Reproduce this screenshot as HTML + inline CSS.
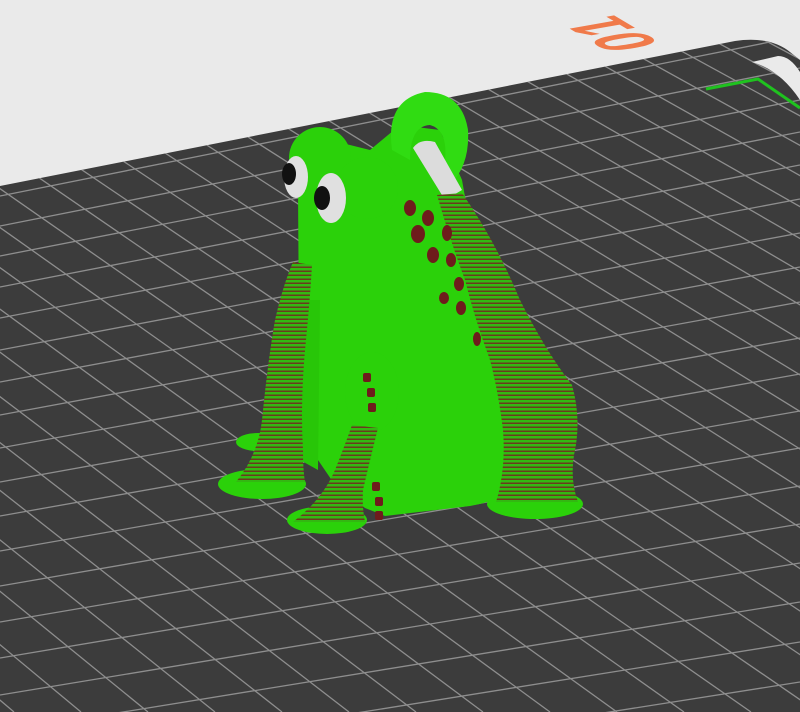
<!DOCTYPE html>
<html><head><meta charset="utf-8"><style>html,body{margin:0;padding:0;background:#eaeaea;overflow:hidden;width:800px;height:712px}svg{display:block}</style></head>
<body>
<svg width="800" height="712" viewBox="0 0 800 712" xmlns="http://www.w3.org/2000/svg">
<defs>
<clipPath id="plate"><path d="M0,186 L735,41 Q770,36 790,52 L800,60 L800,712 L0,712 Z"/></clipPath>
<pattern id="str" width="6" height="4" patternUnits="userSpaceOnUse"><rect width="6" height="4" fill="#33b812"/><rect y="2.5" width="6" height="1.5" fill="#6a3a1e"/></pattern>
</defs>
<rect width="800" height="712" fill="#eaeaea"/>
<text x="0" y="0" transform="matrix(-1.12,-0.67,1.87,-0.33,618,33)" font-family="Liberation Sans, sans-serif" font-weight="bold" font-size="40" fill="#f07a4a" text-anchor="middle" dominant-baseline="middle">01</text>
<path d="M0,186 L735,41 Q770,36 790,52 L800,60 L800,712 L0,712 Z" fill="#3c3c3c"/>
<g clip-path="url(#plate)" stroke="#8e8e8e" stroke-width="1.3" fill="none">
<path d="M0,196L800,36M0,226L800,68M0,256L800,100M0,287L800,132M0,318L800,165M0,350L800,199M0,382L800,233M0,415L800,267M0,448L800,302M0,482L800,338M0,516L800,374M0,551L800,411M0,586L800,448M0,622L800,486M0,658L800,524M0,695L800,563M0,732L800,602M0,770L800,642M0,808L800,682M0,847L800,723"/>
<path d="M-53,712L-3402,-2182M14,712L-3402,-2182M81,712L-3402,-2182M148,712L-3402,-2182M215,712L-3402,-2182M282,712L-3402,-2182M349,712L-3402,-2182M416,712L-3402,-2182M483,712L-3402,-2182M550,712L-3402,-2182M617,712L-3402,-2182M684,712L-3402,-2182M751,712L-3402,-2182M818,712L-3402,-2182M885,712L-3402,-2182M952,712L-3402,-2182M1019,712L-3402,-2182M1086,712L-3402,-2182M1153,712L-3402,-2182M1220,712L-3402,-2182M1287,712L-3402,-2182M1354,712L-3402,-2182M1421,712L-3402,-2182M1488,712L-3402,-2182M1555,712L-3402,-2182M1622,712L-3402,-2182M1689,712L-3402,-2182M1756,712L-3402,-2182M1823,712L-3402,-2182M1890,712L-3402,-2182M1957,712L-3402,-2182M2024,712L-3402,-2182M2091,712L-3402,-2182"/>
</g>
<path d="M752,62 L778,56 Q790,56 800,72 L800,100 Q780,70 752,62 Z" fill="#eaeaea"/>
<polyline points="706,89 758,79 800,108" fill="none" stroke="#1fc21f" stroke-width="3"/>

<ellipse cx="258" cy="442" rx="22" ry="9" fill="#2bd10a"/>
<ellipse cx="262" cy="484" rx="44" ry="15" fill="#2bd10a"/>
<ellipse cx="327" cy="520" rx="40" ry="14" fill="#2bd10a"/>
<ellipse cx="535" cy="504" rx="48" ry="15" fill="#2bd10a"/>

<path d="M298,190 L299,330 Q303,400 318,460 L335,485 L365,508 L385,516 L470,506 Q518,498 520,470 L516,410 L495,350 L478,270 L462,180 L440,130 L400,125 L370,150 L330,140 Z" fill="#2bd10a"/>
<path d="M300,300 L320,300 L318,470 L300,460 Z" fill="#28c608"/>
<path d="M392,150 Q385,100 425,92 Q462,92 468,130 Q470,165 450,185 L445,160 Q448,130 430,125 Q410,126 410,160 Z" fill="#30dc12"/>
<path d="M413,148 Q420,138 435,142 L462,190 L445,200 Z" fill="#dcdcdc"/>
<circle cx="320" cy="158" r="31" fill="#2bd10a"/>
<circle cx="367" cy="188" r="31" fill="#2bd10a"/>
<ellipse cx="296" cy="177" rx="12" ry="21" fill="#e0e0e0"/>
<ellipse cx="289" cy="174" rx="7" ry="11" fill="#111"/>
<ellipse cx="331" cy="198" rx="15" ry="25" fill="#e0e0e0"/>
<ellipse cx="322" cy="198" rx="8" ry="12" fill="#111"/>
<ellipse cx="372" cy="392" rx="27" ry="40" fill="#2bd10a"/>
<path d="M437,195 L462,193 Q495,240 520,300 Q545,350 572,385 Q582,420 574,455 Q570,480 578,502 L496,502 Q506,470 503,430 Q498,390 490,360 Q475,320 465,280 Q450,240 437,195 Z" fill="url(#str)"/>
<path d="M293,262 L312,265 Q310,300 306,340 Q300,400 303,450 Q303,470 305,482 L236,482 Q258,455 262,420 Q268,360 275,320 Q283,285 293,262 Z" fill="url(#str)"/>
<path d="M352,425 L378,428 Q370,460 363,490 Q362,508 365,522 L293,522 Q322,500 335,470 Q345,445 352,425 Z" fill="url(#str)"/>
<g fill="#6e1c1c">
<ellipse cx="410" cy="208" rx="6" ry="8"/><ellipse cx="428" cy="218" rx="6" ry="8"/><ellipse cx="418" cy="234" rx="7" ry="9"/><ellipse cx="447" cy="233" rx="5" ry="8"/><ellipse cx="433" cy="255" rx="6" ry="8"/><ellipse cx="451" cy="260" rx="5" ry="7"/><ellipse cx="459" cy="284" rx="5" ry="7"/><ellipse cx="444" cy="298" rx="5" ry="6"/><ellipse cx="461" cy="308" rx="5" ry="7"/><ellipse cx="477" cy="339" rx="4" ry="7"/>
<rect x="363" y="373" width="8" height="9" rx="2"/><rect x="367" y="388" width="8" height="9" rx="2"/><rect x="368" y="403" width="8" height="9" rx="2"/>
<rect x="372" y="482" width="8" height="9" rx="2"/><rect x="375" y="497" width="8" height="9" rx="2"/><rect x="375" y="511" width="8" height="9" rx="2"/>
</g>
</svg>
</body></html>
